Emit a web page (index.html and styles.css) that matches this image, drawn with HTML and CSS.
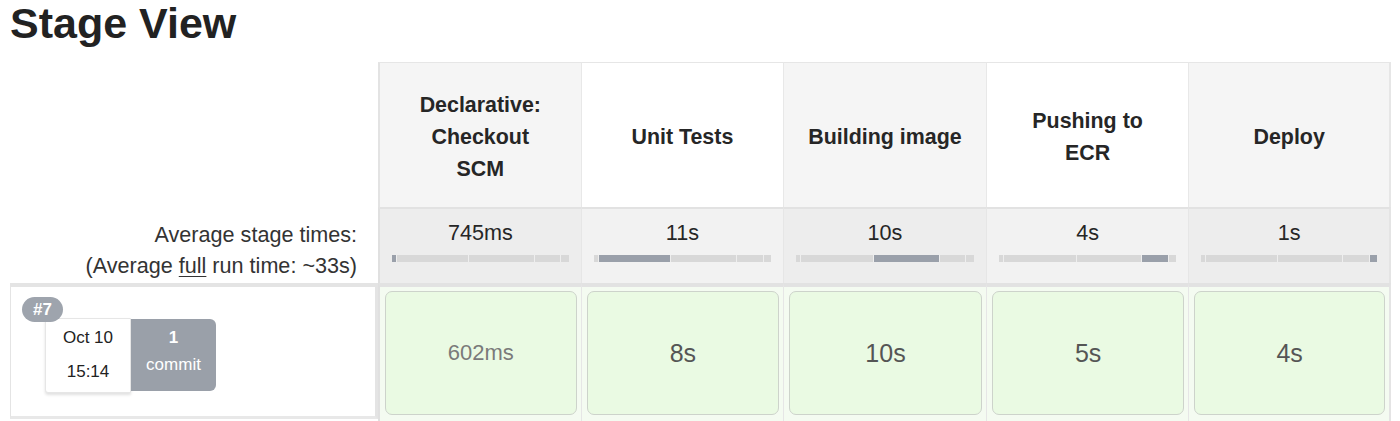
FILE: index.html
```html
<!DOCTYPE html>
<html>
<head>
<meta charset="utf-8">
<link rel="stylesheet" href="styles.css">
</head>
<body>
<h1 class="title">Stage View</h1>
<div class="stage-view">
  <div class="row head-row">
    <div class="label-cell"></div>
    <div class="stage-head odd">Declarative:<br>Checkout<br>SCM</div>
    <div class="stage-head even">Unit Tests</div>
    <div class="stage-head odd">Building image</div>
    <div class="stage-head even">Pushing to<br>ECR</div>
    <div class="stage-head odd">Deploy</div>
  </div>
  <div class="row avg-row">
    <div class="label-cell avg-label">Average stage times:<br>(Average <u>full</u> run time: ~33s)</div>
    <div class="avg-cell odd">
      <div class="avg-time">745ms</div>
      <div class="bar"><span class="seg s1 on"></span><span class="seg s2"></span><span class="seg s3"></span><span class="seg s4"></span><span class="seg s5"></span></div>
    </div>
    <div class="avg-cell even">
      <div class="avg-time">11s</div>
      <div class="bar"><span class="seg s1"></span><span class="seg s2 on"></span><span class="seg s3"></span><span class="seg s4"></span><span class="seg s5"></span></div>
    </div>
    <div class="avg-cell odd">
      <div class="avg-time">10s</div>
      <div class="bar"><span class="seg s1"></span><span class="seg s2"></span><span class="seg s3 on"></span><span class="seg s4"></span><span class="seg s5"></span></div>
    </div>
    <div class="avg-cell even">
      <div class="avg-time">4s</div>
      <div class="bar"><span class="seg s1"></span><span class="seg s2"></span><span class="seg s3"></span><span class="seg s4 on"></span><span class="seg s5"></span></div>
    </div>
    <div class="avg-cell odd">
      <div class="avg-time">1s</div>
      <div class="bar"><span class="seg s1"></span><span class="seg s2"></span><span class="seg s3"></span><span class="seg s4"></span><span class="seg s5 on"></span></div>
    </div>
  </div>
  <div class="row build-row">
    <div class="label-cell build-wrap">
      <div class="build-info">
        <span class="badge">#7</span>
        <div class="build-card">
          <div class="date"><div>Oct 10</div><div>15:14</div></div>
          <div class="commits"><div class="num">1</div><div>commit</div></div>
        </div>
      </div>
    </div>
    <div class="stage-cell"><div class="stage-box light">602ms</div></div>
    <div class="stage-cell"><div class="stage-box">8s</div></div>
    <div class="stage-cell"><div class="stage-box">10s</div></div>
    <div class="stage-cell"><div class="stage-box">5s</div></div>
    <div class="stage-cell"><div class="stage-box">4s</div></div>
  </div>
</div>
</body>
</html>
```
FILE: styles.css
```css
html, body {
  margin: 0;
  padding: 0;
  background: #fff;
  font-family: "Liberation Sans", Arial, Helvetica, sans-serif;
  color: #333;
}
.title {
  margin: 0 0 16px 0;
  padding-left: 10px;
  font-size: 43px;
  line-height: 46px;
  font-weight: bold;
  color: #222;
}
.stage-view {
  display: flex;
  flex-direction: column;
  width: 1392px;
}
.row {
  display: flex;
}
.label-cell {
  width: 378px;
  flex: none;
}
.stage-head {
  width: 202.6px;
  height: 145px;
  box-sizing: border-box;
  border-top: 1px solid #e6e6e6;
  border-left: 1px solid #e8e8e8;
  display: flex;
  align-items: center;
  justify-content: center;
  text-align: center;
  font-weight: bold;
  font-size: 21.4px;
  line-height: 32px;
  color: #262626;
  padding-top: 4px;
}
.head-row .stage-head:nth-child(2) {
  border-left: 2px solid #e3e3e3;
}
.stage-head:last-child {
  border-right: 2px solid #e6e6e6;
}
.stage-head.odd { background: #f5f5f5; }
.stage-head.even { background: #fff; }

.avg-label {
  box-sizing: border-box;
  text-align: right;
  padding: 12px 21px 0 0;
  font-size: 21.6px;
  line-height: 31px;
  color: #333;
}
.avg-label u {
  text-decoration-thickness: 1px;
  text-underline-offset: 3px;
}
.avg-cell {
  width: 202.6px;
  height: 76px;
  box-sizing: border-box;
  border-left: 1px solid #e6e6e6;
  padding: 12px 12px 0 12px;
  border-top: 2px solid #e2e2e2;
}
.avg-row .avg-cell:nth-child(2) { border-left: 2px solid #e0e0e0; }
.avg-row .avg-cell:last-child { border-right: 2px solid #e4e4e4; }
.avg-cell.odd { background: #ededed; }
.avg-cell.even { background: #f2f2f2; }
.avg-time {
  text-align: center;
  font-size: 21.6px;
  line-height: 24px;
  color: #262626;
}
.bar {
  display: flex;
  margin-top: 10px;
  height: 7px;
  background: #dadada;
}
.seg {
  height: 100%;
  background: #d8d8d8;
  border-right: 1px solid #eeeeee;
  box-sizing: border-box;
}
.seg:last-child { border-right: 0; }
.seg.on { background: #9aa0aa; }
.s1 { width: 2.8%; }
.s2 { width: 41%; }
.s3 { width: 37%; }
.s4 { width: 15%; }
.s5 { width: 4.2%; }

.build-row {
  height: 138px;
}
.build-wrap {
  box-sizing: border-box;
  padding-left: 10px;
}
.build-info {
  position: relative;
  box-sizing: border-box;
  height: 136px;
  border-top: 4px solid #e4e4e4;
  border-bottom: 3px solid #e8e8e8;
  border-left: 1px solid #e4e4e4;
  border-right: 3px solid #e4e4e4;
  background: #fff;
  padding: 31px 0 0 34px;
}
.badge {
  position: absolute;
  left: 11px;
  top: 10px;
  z-index: 2;
  background: #9ea4ad;
  color: #fff;
  font-weight: bold;
  font-size: 17px;
  line-height: 25px;
  padding: 0 11px;
  border-radius: 13px;
}
.build-card {
  display: flex;
}
.date {
  width: 86px;
  height: 75px;
  box-sizing: border-box;
  background: #fff;
  border: 1px solid #e6e6e6;
  box-shadow: 0 2px 3px rgba(0,0,0,0.12);
  border-radius: 3px 0 0 3px;
  text-align: center;
  font-size: 17px;
  line-height: 34px;
  padding-top: 2px;
  color: #222;
}
.commits {
  width: 85px;
  height: 72px;
  margin-top: 1px;
  box-sizing: border-box;
  background: #9aa0a9;
  border-radius: 0 6px 6px 0;
  color: #fff;
  text-align: center;
  font-size: 17px;
  line-height: 27px;
  padding-top: 5px;
}
.commits .num { font-weight: bold; }

.stage-cell {
  width: 202.6px;
  box-sizing: border-box;
  border-top: 4px solid #e2e2e2;
  border-left: 1px solid #e6e6e6;
  background: #f4fbf1;
  padding: 4px 4px 3px 5px;
}
.build-row .stage-cell:nth-child(2) { border-left: 2px solid #e0e0e0; }
.build-row .stage-cell:last-child { border-right: 2px solid #e4e4e4; }
.stage-box {
  height: 124px;
  box-sizing: border-box;
  background: #eafae3;
  border: 1px solid #cdd3cb;
  border-radius: 7px;
  display: flex;
  align-items: center;
  justify-content: center;
  font-size: 25px;
  color: #555;
}
.stage-box.light {
  font-size: 22px;
  color: #7a7a7a;
}
```
